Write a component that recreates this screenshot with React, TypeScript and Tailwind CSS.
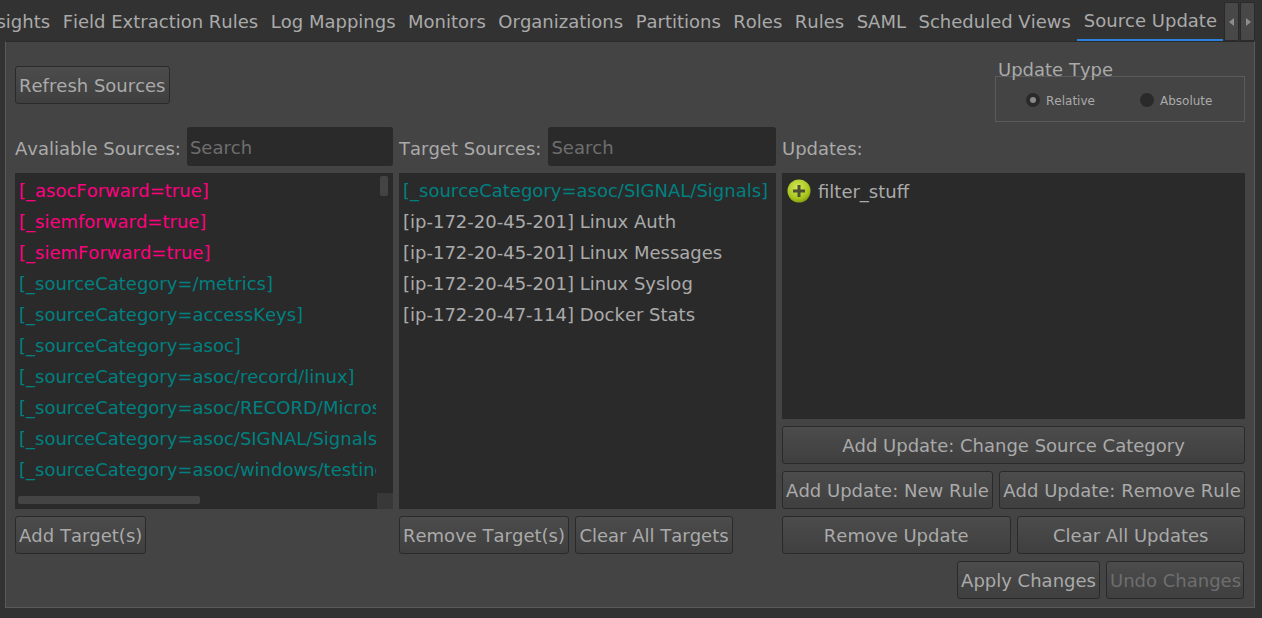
import React from 'react';

const tabs = [
  'Insights',
  'Field Extraction Rules',
  'Log Mappings',
  'Monitors',
  'Organizations',
  'Partitions',
  'Roles',
  'Rules',
  'SAML',
  'Scheduled Views',
  'Source Update',
];

const pink = 'text-[#ff0080]';
const teal = 'text-[#008080]';

const availableSources = [
  { name: '[_asocForward=true]', color: pink },
  { name: '[_siemforward=true]', color: pink },
  { name: '[_siemForward=true]', color: pink },
  { name: '[_sourceCategory=/metrics]', color: teal },
  { name: '[_sourceCategory=accessKeys]', color: teal },
  { name: '[_sourceCategory=asoc]', color: teal },
  { name: '[_sourceCategory=asoc/record/linux]', color: teal },
  { name: '[_sourceCategory=asoc/RECORD/Microsoft]', color: teal },
  { name: '[_sourceCategory=asoc/SIGNAL/Signals]', color: teal },
  { name: '[_sourceCategory=asoc/windows/testing]', color: teal },
];

const targetSources = [
  { name: '[_sourceCategory=asoc/SIGNAL/Signals]', color: teal },
  { name: '[ip-172-20-45-201] Linux Auth', color: 'text-[#aaaaaa]' },
  { name: '[ip-172-20-45-201] Linux Messages', color: 'text-[#aaaaaa]' },
  { name: '[ip-172-20-45-201] Linux Syslog', color: 'text-[#aaaaaa]' },
  { name: '[ip-172-20-47-114] Docker Stats', color: 'text-[#aaaaaa]' },
];

type BtnProps = {
  label: string;
  className?: string;
  disabled?: boolean;
};

const Btn: React.FC<BtnProps> = ({ label, className = '', disabled }) => (
  <button
    className={`h-[38px] rounded-[3px] border border-[#2a2a2a] bg-gradient-to-b from-[#4c4c4c] to-[#3f3f3f] px-[3px] pt-[2px] whitespace-nowrap ${
      disabled ? 'text-[#6e6e6e]' : 'text-[#aaaaaa]'
    } ${className}`}
  >
    {label}
  </button>
);

const Radio = ({ label, checked }: { label: string; checked?: boolean }) => (
  <div className="flex items-center gap-[6px] text-[12px] text-[#aaaaaa]">
    <span className="flex h-[14px] w-[14px] items-center justify-center rounded-full bg-[#2a2a2a]">
      {checked && <span className="h-[6px] w-[6px] rounded-full bg-[#8a8a8a]" />}
    </span>
    <span className="pt-[1px]">{label}</span>
  </div>
);

const SearchBox = ({ className = '' }: { className?: string }) => (
  <div className={`flex h-[39px] items-center rounded-[3px] bg-[#2a2a2a] pt-[2px] pl-[3px] text-[#6e6e6e] ${className}`}>
    Search
  </div>
);

export default function App() {
  return (
    <div className="flex h-[618px] w-[1262px] flex-col overflow-hidden bg-[#323232] font-['DejaVu_Sans',sans-serif] text-[18px] leading-[24px] text-[#aaaaaa] [font-kerning:none]">
      {/* Tab bar */}
      <div className="flex h-[41px] shrink-0">
        <div className="flex w-[1223px] justify-end overflow-hidden">
          {tabs.map((tab) => (
            <div
              key={tab}
              className={`flex h-[41px] shrink-0 items-center pt-[2px] whitespace-nowrap ${
                tab === 'Source Update'
                  ? 'border-b-2 border-[#2a82da] pr-[6px] pl-[6.5px]'
                  : 'pr-[6.5px] pl-[6px]'
              }`}
            >
              {tab}
            </div>
          ))}
        </div>
        <div className="ml-[1px] flex gap-[1px] pt-[2px]">
          <div className="flex h-[39px] w-[15px] items-center justify-center rounded-[2px] border border-[#2a2a2a] bg-[#484848]">
            <svg width="6" height="8" viewBox="0 0 6 8">
              <path d="M5 0v8L0 4z" fill="#8c8c8c" />
            </svg>
          </div>
          <div className="flex h-[39px] w-[15px] items-center justify-center rounded-[2px] border border-[#2a2a2a] bg-[#484848]">
            <svg width="6" height="8" viewBox="0 0 6 8">
              <path d="M1 0v8l5-4z" fill="#8c8c8c" />
            </svg>
          </div>
        </div>
      </div>

      {/* Panel */}
      <div className="ml-[5px] h-[567px] w-[1250px] border border-[#5a5a5a] border-t-[#2a2a2a] bg-[#444444] pl-[9px]">
        {/* Header */}
        <div className="flex h-[85px] w-[1230px] items-start justify-between">
          <Btn label="Refresh Sources" className="mt-[24px]" />
          <div className="relative mt-[34px] flex h-[46px] w-[250px] items-center border border-[#5a5a5a] pt-[2px]">
            <span className="absolute top-[-19px] left-[2px]">Update Type</span>
            <div className="flex w-full pl-[30px]">
              <div className="w-[114px]">
                <Radio label="Relative" checked />
              </div>
              <Radio label="Absolute" />
            </div>
          </div>
        </div>

        <div className="flex gap-[6px]">
          {/* Available */}
          <div className="flex w-[378px] flex-col">
            <div className="flex h-[39px] items-center gap-[6px]">
              <span className="pt-[5px] whitespace-nowrap">Avaliable Sources:</span>
              <SearchBox className="flex-1" />
            </div>
            <div className="relative mt-[7px] h-[336px] overflow-hidden bg-[#2a2a2a]">
              <div className="w-[361px] overflow-hidden pt-[2px] pl-[4px]">
                {availableSources.map((s) => (
                  <div key={s.name} className={`flex h-[31px] items-center whitespace-nowrap ${s.color}`}>
                    {s.name}
                  </div>
                ))}
              </div>
              <div className="absolute top-[3px] right-[5px] h-[20px] w-[8px] rounded-[2px] bg-[#444444]" />
              <div className="absolute bottom-[5px] left-[3px] h-[8px] w-[182px] rounded-[2px] bg-[#444444]" />
              <div className="absolute right-0 bottom-0 h-[16px] w-[16px] bg-[#383838]" />
            </div>
            <div className="mt-[7px]">
              <Btn label="Add Target(s)" />
            </div>
          </div>

          {/* Targets */}
          <div className="flex w-[377px] flex-col">
            <div className="flex h-[39px] items-center gap-[7px]">
              <span className="pt-[5px] whitespace-nowrap">Target Sources:</span>
              <SearchBox className="flex-1" />
            </div>
            <div className="mt-[7px] h-[336px] overflow-hidden bg-[#2a2a2a] pt-[2px] pl-[4px]">
              {targetSources.map((s) => (
                <div key={s.name} className={`flex h-[31px] items-center whitespace-nowrap ${s.color}`}>
                  {s.name}
                </div>
              ))}
            </div>
            <div className="mt-[7px] flex gap-[6px]">
              <Btn label="Remove Target(s)" />
              <Btn label="Clear All Targets" className="w-[158px]" />
            </div>
          </div>

          {/* Updates */}
          <div className="flex w-[463px] flex-col">
            <div className="flex h-[39px] items-center">
              <span className="pt-[5px]">Updates:</span>
            </div>
            <div className="mt-[7px] h-[246px] bg-[#2a2a2a] pt-[4px] pl-[5px]">
              <div className="flex h-[28px] items-center gap-[7px]">
                <svg width="24" height="24" viewBox="0 0 24 24">
                  <defs>
                    <radialGradient id="plusBall" cx="45%" cy="35%" r="70%">
                      <stop offset="0%" stopColor="#d8e85a" />
                      <stop offset="70%" stopColor="#a8c41c" />
                      <stop offset="100%" stopColor="#7c9410" />
                    </radialGradient>
                  </defs>
                  <circle cx="12" cy="12" r="11.5" fill="url(#plusBall)" />
                  <path d="M10.5 6h3v4.5H18v3h-4.5V18h-3v-4.5H6v-3h4.5z" fill="#4a4f34" />
                </svg>
                <span className="pt-[1px]">filter_stuff</span>
              </div>
            </div>
            <div className="mt-[7px] flex flex-col gap-[7px]">
              <Btn label="Add Update: Change Source Category" className="w-full" />
              <div className="flex gap-[6px]">
                <Btn label="Add Update: New Rule" className="w-[211px]" />
                <Btn label="Add Update: Remove Rule" className="flex-1" />
              </div>
              <div className="flex gap-[6px]">
                <Btn label="Remove Update" className="flex-1" />
                <Btn label="Clear All Updates" className="flex-1" />
              </div>
              <div className="flex justify-end gap-[6px] pr-[1px]">
                <Btn label="Apply Changes" className="w-[143px]" />
                <Btn label="Undo Changes" className="w-[138px]" disabled />
              </div>
            </div>
          </div>
        </div>
      </div>
    </div>
  );
}
